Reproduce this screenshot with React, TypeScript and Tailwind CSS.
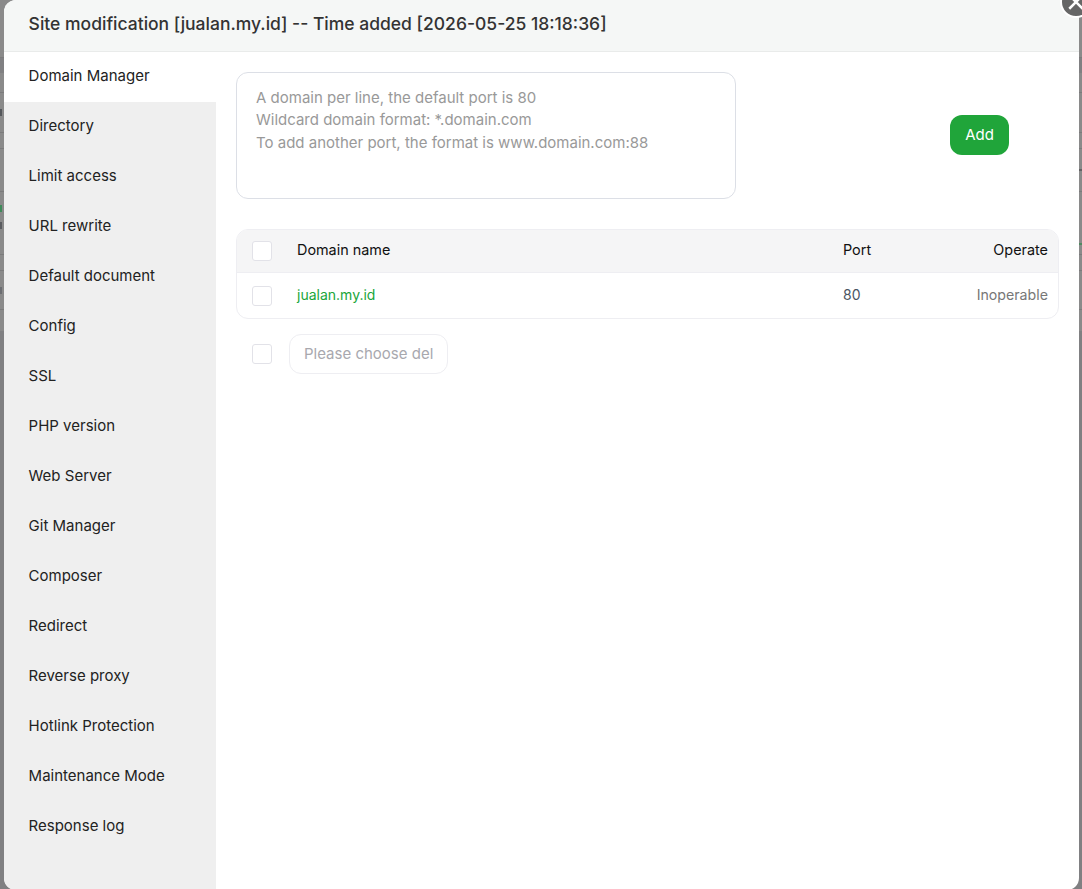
const NAV = [
  'Domain Manager',
  'Directory',
  'Limit access',
  'URL rewrite',
  'Default document',
  'Config',
  'SSL',
  'PHP version',
  'Web Server',
  'Git Manager',
  'Composer',
  'Redirect',
  'Reverse proxy',
  'Hotlink Protection',
  'Maintenance Mode',
  'Response log',
];

// slivers of the page behind the overlay, visible only at the window edges
const BEHIND = [
  { cls: 'h-[58px] border-b border-[#7b7b7c]', left: '', right: '' },
  { cls: 'h-[15px] bg-[#808082]', left: '', right: '' },
  { cls: 'h-[20px] border-b border-[#7b7b7c]', left: '', right: '' },
  { cls: 'h-[40px] border-b border-[#7b7b7c]', left: 'bg-[#55585c]', right: '' },
  { cls: 'h-[16px] border-b border-[#7b7b7c]', left: '', right: '' },
  { cls: 'h-[43px] border-b border-[#7b7b7c]', left: '', right: 'bg-[#626264]' },
  { cls: 'h-[8px]', left: '', right: '' },
  { cls: 'h-[16px]', left: 'bg-[#3f8a5a]', right: '' },
  { cls: 'h-[18px]', left: 'bg-[#5a5c60]', right: '' },
  { cls: 'h-[21px] border-b border-[#7b7b7c]', left: '', right: 'bg-[#4f8a60]' },
  { cls: 'h-[16px] border-b border-[#7b7b7c]', left: '', right: '' },
  { cls: 'h-[39px] border-b border-[#7b7b7c]', left: 'bg-[#6c6e72]', right: '' },
  { cls: 'h-[21px]', left: '', right: '' },
];

function Check() {
  return <span className="block h-5 w-5 shrink-0 rounded-[3px] border border-[#e2e2e8] bg-white" />;
}

export default function App() {
  return (
    <div className="relative h-[889px] w-[1082px] overflow-hidden bg-[#8a8a8a] font-['Inter',sans-serif]">
      {BEHIND.map((row, i) => (
        <div key={i} className={`flex items-center justify-between ${row.cls}`}>
          <span className={`h-[7px] w-[2px] ${row.left}`} />
          <span className={`h-[2px] w-[3px] ${row.right}`} />
        </div>
      ))}
      <div className="h-[558px] bg-[#808082]" />

      <div className="absolute left-1 top-0 flex h-[890px] w-[1075px] flex-col overflow-hidden rounded-xl bg-white">
        <div className="flex h-[52px] shrink-0 items-center border-b border-[#e9ebea] bg-[#f5f7f6] pb-[3px] pl-[24.6px] text-[17.5px] font-medium text-[#333333]">
          Site modification [jualan.my.id] -- Time added [2026-05-25 18:18:36]
        </div>
        <div className="flex min-h-0 flex-1">
          <nav className="w-[212px] shrink-0 bg-[#efefef]">
            {NAV.map((name, i) => (
              <div
                key={name}
                className={
                  i === 0
                    ? 'flex h-[50px] items-center bg-white pb-[2px] pl-[24.6px] text-[15px] text-[#222222]'
                    : 'flex h-[50px] items-center pb-[2px] pl-[24.6px] text-[15px] text-[#222222]'
                }
              >
                {name}
              </div>
            ))}
          </nav>
          <main className="flex-1 px-5 pt-5">
            <div className="flex items-start">
              <div className="h-[127px] w-[500px] rounded-xl border border-[#dcdfe6] px-[19px] pt-[13.9px] text-[15px] leading-[22.5px] text-[#999999]">
                <div>A domain per line, the default port is 80</div>
                <div>Wildcard domain format: *.domain.com</div>
                <div>To add another port, the format is www.domain.com:88</div>
              </div>
              <button className="ml-[214px] mt-[43px] h-10 w-[59px] rounded-xl bg-[#20a53a] text-[15px] text-white">Add</button>
            </div>
            <div className="mt-[30px] overflow-hidden rounded-xl border border-[#eeeef2]">
              <div className="flex h-[43px] items-center border-b border-[#eeeef2] bg-[#f5f5f6] pl-[15px] pr-[10px] text-[14.4px] text-[#111111]">
                <Check />
                <span className="ml-[25px] w-[546px] pb-[2px]">Domain name</span>
                <span className="flex-1 pb-[2px]">Port</span>
                <span className="pb-[2px]">Operate</span>
              </div>
              <div className="flex h-[45px] items-center pl-[15px] pr-[10px] text-[14px]">
                <Check />
                <span className="ml-[25px] w-[546px] pb-[2px] text-[#20a53a]">jualan.my.id</span>
                <span className="flex-1 pb-[2px] text-[#4b5563]">80</span>
                <span className="pb-[2px] text-[14.2px] text-[#777777]">Inoperable</span>
              </div>
            </div>
            <div className="mt-[15px] flex items-center pl-4">
              <Check />
              <div className="ml-[17px] flex h-10 w-[159px] items-center rounded-xl border border-[#eeeef2] pl-[14px] text-[15px] text-[#a8a8ae]">
                Please choose del
              </div>
            </div>
          </main>
        </div>
      </div>

      <div className="absolute -right-[10px] -top-[14px] flex h-8 w-8 items-center justify-center rounded-full border-2 border-white bg-[#666666] text-white">
        <svg viewBox="0 0 16 16" className="h-[18px] w-[18px]" fill="none" stroke="currentColor" strokeWidth="2.2">
          <path d="M2 2 14 14M14 2 2 14" />
        </svg>
      </div>
    </div>
  );
}
